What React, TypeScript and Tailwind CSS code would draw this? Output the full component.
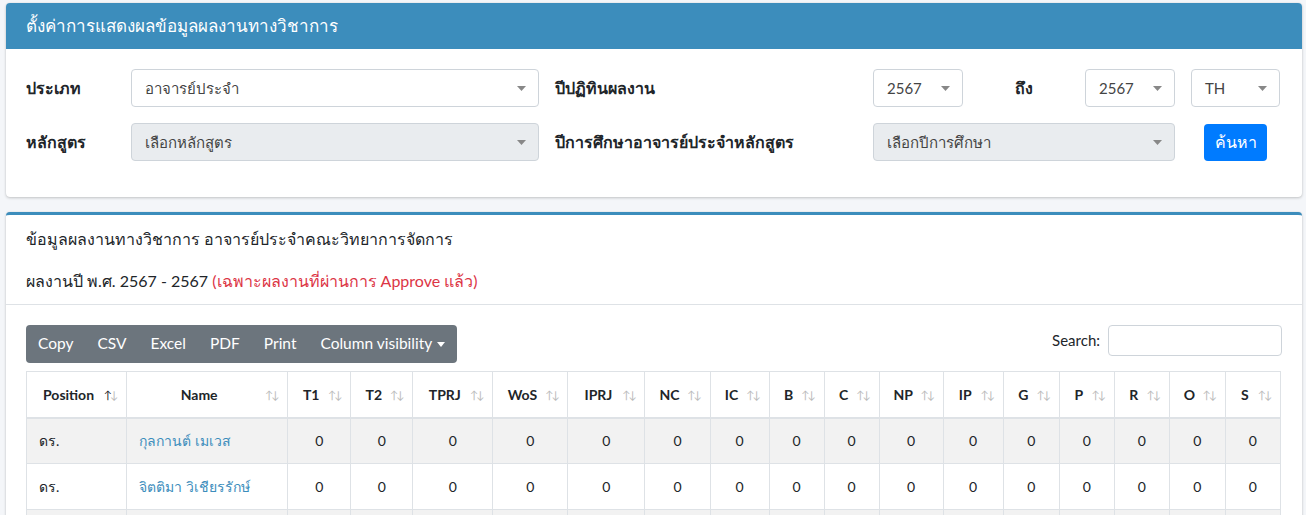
import React from "react";

const Caret = () => (
  <svg width="9" height="5" viewBox="0 0 9 5" className="shrink-0">
    <path d="M0 0h9L4.5 5z" fill="#888" />
  </svg>
);

const Select = ({
  value,
  width,
  disabled = false,
}: {
  value: string;
  width: string;
  disabled?: boolean;
}) => (
  <div
    className={`${width} h-[38px] flex items-center justify-between pl-[13px] pr-[12px] border border-[#ced4da] rounded-[4px] text-[15px] text-[#444] ${
      disabled ? "bg-[#e9ecef]" : "bg-white"
    }`}
  >
    <span>{value}</span>
    <Caret />
  </div>
);

const SortIcon = ({ active = false }: { active?: boolean }) => (
  <span className="absolute right-[10px] top-1/2 -translate-y-1/2 text-[11px] font-normal leading-none tracking-[-2px]">
    <span className={active ? "text-[#212529]" : "text-[#bbb]"}>↑</span>
    <span className="text-[#bbb]">↓</span>
  </span>
);

const columns = [
  { name: "Position", w: "w-[100px]" },
  { name: "Name", w: "w-[161px]" },
  { name: "T1", w: "w-[63px]" },
  { name: "T2", w: "w-[62px]" },
  { name: "TPRJ", w: "w-[80px]" },
  { name: "WoS", w: "w-[75px]" },
  { name: "IPRJ", w: "w-[77px]" },
  { name: "NC", w: "w-[65px]" },
  { name: "IC", w: "w-[59px]" },
  { name: "B", w: "w-[55px]" },
  { name: "C", w: "w-[55px]" },
  { name: "NP", w: "w-[64px]" },
  { name: "IP", w: "w-[60px]" },
  { name: "G", w: "w-[56px]" },
  { name: "P", w: "w-[55px]" },
  { name: "R", w: "w-[55px]" },
  { name: "O", w: "w-[56px]" },
  { name: "S", w: "w-[55px]" },
];

const rows = [
  { pos: "ดร.", name: "กุลกานต์ เมเวส" },
  { pos: "ดร.", name: "จิตติมา วิเชียรรักษ์" },
  { pos: "ดร.", name: "ชนิดา ยาระณะ" },
];

export default function App() {
  return (
    <div
      className="min-h-[515px] bg-[#f4f6f9] pl-[6px] pr-[4px] pt-[3px] text-[#212529]"
      style={{ fontFamily: "Lato, 'Noto Sans', sans-serif" }}
    >
      {/* settings card */}
      <div className="bg-white rounded-[4px] shadow-[0_0_1px_rgba(0,0,0,0.125),0_1px_3px_rgba(0,0,0,0.2)]">
        <div className="h-[46px] bg-[#3c8dbc] rounded-t-[4px] px-[20px] flex items-center text-white text-[17px]">
          ตั้งค่าการแสดงผลข้อมูลผลงานทางวิชาการ
        </div>
        <div className="px-[20px] pt-[20px] pb-[36px] flex flex-col gap-[16px]">
          <div className="flex items-center">
            <div className="w-[105px] font-bold text-[16px]">ประเภท</div>
            <Select value="อาจารย์ประจำ" width="w-[408px]" />
            <div className="w-[318px] ml-[16px] font-bold text-[16px]">ปีปฏิทินผลงาน</div>
            <Select value="2567" width="w-[90px]" />
            <div className="w-[122px] text-center font-bold text-[16px]">ถึง</div>
            <Select value="2567" width="w-[90px]" />
            <div className="ml-[16px]">
              <Select value="TH" width="w-[89px]" />
            </div>
          </div>
          <div className="flex items-center">
            <div className="w-[105px] font-bold text-[16px]">หลักสูตร</div>
            <Select value="เลือกหลักสูตร" width="w-[408px]" disabled />
            <div className="w-[318px] ml-[16px] font-bold text-[16px]">
              ปีการศึกษาอาจารย์ประจำหลักสูตร
            </div>
            <Select value="เลือกปีการศึกษา" width="w-[302px]" disabled />
            <button className="ml-[29px] h-[37px] w-[63px] bg-[#007bff] text-white text-[16px] rounded-[4px]">
              ค้นหา
            </button>
          </div>
        </div>
      </div>

      {/* results card */}
      <div className="mt-[15px] bg-white rounded-[4px] border-t-[3px] border-[#3c8dbc] shadow-[0_0_1px_rgba(0,0,0,0.125),0_1px_3px_rgba(0,0,0,0.2)]">
        <div className="px-[20px] pt-[12px] pb-[11px] border-b border-[#dee2e6]">
          <div className="text-[16px] leading-[24px]">
            ข้อมูลผลงานทางวิชาการ อาจารย์ประจำคณะวิทยาการจัดการ
          </div>
          <div className="mt-[18px] text-[16px] leading-[24px]">
            ผลงานปี พ.ศ. 2567 - 2567{" "}
            <span className="text-[#dc3545]">(เฉพาะผลงานที่ผ่านการ Approve แล้ว)</span>
          </div>
        </div>
        <div className="px-[20px] pt-[20px]">
          <div className="flex items-start justify-between">
            <div className="flex h-[38px] bg-[#6c757d] rounded-[4px] text-white text-[15.5px]">
              {["Copy", "CSV", "Excel", "PDF", "Print"].map((b) => (
                <div key={b} className="px-[12px] flex items-center">
                  {b}
                </div>
              ))}
              <div className="px-[12px] flex items-center gap-[5px]">
                Column visibility
                <svg width="8" height="5" viewBox="0 0 8 5">
                  <path d="M0 0h8L4 5z" fill="#fff" />
                </svg>
              </div>
            </div>
            <div className="flex items-center gap-[8px] text-[15px]">
              <span>Search:</span>
              <div className="w-[174px] h-[31px] border border-[#ced4da] rounded-[4px] bg-white" />
            </div>
          </div>

          <table className="mt-[8px] table-fixed border-collapse w-[1255px] text-[14px]">
            <thead>
              <tr>
                {columns.map((c, i) => (
                  <th
                    key={c.name}
                    className={`${c.w} relative h-[46px] pl-[12px] pr-[28px] border border-[#dee2e6] border-b-2 font-bold text-center`}
                  >
                    {c.name}
                    <SortIcon active={i === 0} />
                  </th>
                ))}
              </tr>
            </thead>
            <tbody>
              {rows.map((r, ri) => (
                <tr key={ri} className={ri % 2 === 0 ? "bg-[#f2f2f2]" : "bg-white"}>
                  <td className="h-[46px] px-[12px] border border-[#dee2e6]">{r.pos}</td>
                  <td className="h-[46px] px-[12px] border border-[#dee2e6] text-[#3c8dbc]">
                    {r.name}
                  </td>
                  {columns.slice(2).map((c) => (
                    <td key={c.name} className="h-[46px] border border-[#dee2e6] text-center">
                      0
                    </td>
                  ))}
                </tr>
              ))}
            </tbody>
          </table>
        </div>
      </div>
    </div>
  );
}
